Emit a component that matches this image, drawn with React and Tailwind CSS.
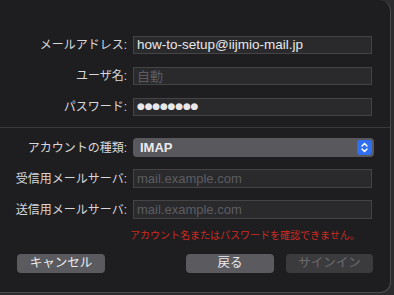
import React from "react";

const jp = "font-['Liberation_Sans','Noto_Sans_CJK_JP',sans-serif]";

function Label({ children }) {
  return (
    <div className={`w-[127px] shrink-0 text-right text-[12px] leading-none text-[#d8d8da] ${jp}`}>
      {children}
    </div>
  );
}

function Field({ value, placeholder, h = "h-[18px]" }) {
  return (
    <div
      className={`w-[239px] ${h} flex items-center border border-[#444447] bg-[#2a2a2d] px-[3px] text-[13px] leading-none ${jp}`}
    >
      {value ? (
        <span className="text-[13.5px] text-[#e8e8ea]">{value}</span>
      ) : (
        <span className="text-[#5c5c60]">{placeholder}</span>
      )}
    </div>
  );
}

function Row({ label, children, className = "" }) {
  return (
    <div className={`flex items-center gap-[6px] ${className}`}>
      <Label>{label}</Label>
      {children}
    </div>
  );
}

export default function App() {
  return (
    <div className="w-[394px] h-[295px] bg-[#2c2c2e] overflow-hidden">
      <div className="w-[391px] h-[293px] bg-[#1e1e21] rounded-tr-[11px] rounded-br-[11px] border-r border-b border-[#4a4a4d] flex flex-col">
        <Row label="メールアドレス:" className="mt-[36px]">
          <Field value="how-to-setup@iijmio-mail.jp" />
        </Row>
        <Row label="ユーザ名:" className="mt-[13px]">
          <Field placeholder="自動" />
        </Row>
        <Row label="パスワード:" className="mt-[13px]">
          <div className="w-[239px] h-[18px] flex items-center border border-[#444447] bg-[#2a2a2d] px-[3px] text-[9px] tracking-[-0.2px] text-[#e8e8ea] font-['DejaVu_Sans',sans-serif]">
            ●●●●●●●●
          </div>
        </Row>
        <div className="mt-[11px] h-px w-full bg-[#3a3a3d]" />
        <Row label="アカウントの種類:" className="mt-[10px]">
          <div className="w-[241px] h-[19px] rounded-[4px] bg-[#59595d] flex items-center justify-between pl-[7px] pr-[2px]">
            <span className="text-[13px] font-bold text-[#ececee] font-['Liberation_Sans',sans-serif] leading-none">
              IMAP
            </span>
            <span className="w-[15px] h-[15px] rounded-[3px] bg-[#2f6ff0] flex items-center justify-center">
              <svg width="9" height="11" viewBox="0 0 9 11" fill="none" stroke="white" strokeWidth="1.5" strokeLinecap="round" strokeLinejoin="round">
                <path d="M2 4l2.5-2.5L7 4" />
                <path d="M2 7l2.5 2.5L7 7" />
              </svg>
            </span>
          </div>
        </Row>
        <Row label="受信用メールサーバ:" className="mt-[12px]">
          <Field placeholder="mail.example.com" h="h-[19px]" />
        </Row>
        <Row label="送信用メールサーバ:" className="mt-[12px]">
          <Field placeholder="mail.example.com" h="h-[19px]" />
        </Row>
        <div className={`mt-[10px] pl-[130px] text-[10px] leading-[14px] text-[#cf2a20] ${jp}`}>
          アカウント名またはパスワードを確認できません。
        </div>
        <div className="mt-[11px] flex items-center">
          <button className={`ml-[17px] w-[88px] h-[19px] rounded-[4px] bg-[#5b5b5f] text-[12.5px] leading-none text-[#ececee] ${jp}`}>
            キャンセル
          </button>
          <button className={`ml-[81px] w-[88px] h-[19px] rounded-[4px] bg-[#5b5b5f] text-[12.5px] leading-none text-[#ececee] ${jp}`}>
            戻る
          </button>
          <button className={`ml-[12px] w-[87px] h-[19px] rounded-[4px] bg-[#3b3b3e] text-[12.5px] leading-none text-[#6a6a6e] ${jp}`}>
            サインイン
          </button>
        </div>
      </div>
    </div>
  );
}
